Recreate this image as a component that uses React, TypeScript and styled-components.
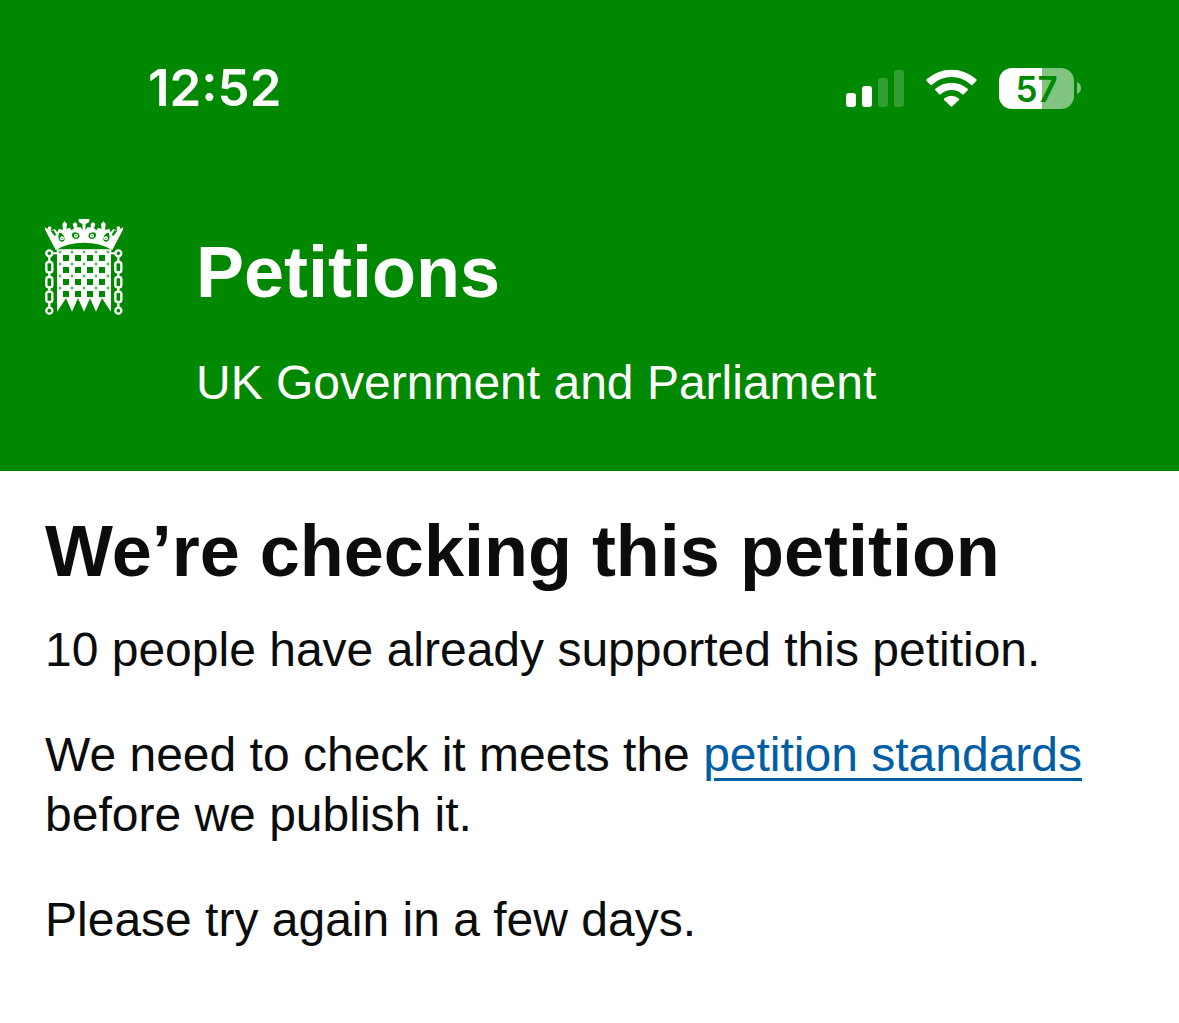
import React from "react";
import styled, { createGlobalStyle } from "styled-components";

const green = "#008800";

const GlobalStyle = createGlobalStyle`
  *, *::before, *::after { box-sizing: border-box; }
  body {
    margin: 0;
    background: #ffffff;
    color: #0b0c0c;
    font-family: "Liberation Sans", Arial, sans-serif;
    font-size: 48px;
    line-height: 60px;
  }
`;

const Banner = styled.header`
  background: ${green};
  color: #ffffff;
  padding-bottom: 58px;
`;

const StatusBar = styled.div`
  display: flex;
  align-items: center;
  justify-content: space-between;
  padding: 57px 98px 0 148px;
  font-family: Inter, sans-serif;
`;

const Clock = styled.time`
  font-size: 51px;
  font-weight: 600;
  line-height: 62px;
`;

const Indicators = styled.div`
  display: flex;
  align-items: center;
  gap: 22px;

  svg { display: block; }
`;

const BatteryGroup = styled.div`
  display: flex;
  align-items: center;
  gap: 3px;
`;

const Battery = styled.div<{ $level: number }>`
  width: 75px;
  height: 41px;
  border-radius: 13px;
  background: linear-gradient(
    to right,
    #ffffff ${(p) => p.$level}%,
    #80c480 ${(p) => p.$level}%
  );
  color: ${green};
  font-size: 35px;
  font-weight: 600;
  line-height: 42px;
  text-align: center;
`;

const Brand = styled.div`
  display: flex;
  align-items: flex-start;
  gap: 72px;
  padding: 99px 44px 0;
`;

const CrestLink = styled.a`
  flex: none;
  display: block;

  svg { display: block; }
`;

const BrandText = styled.div`
  padding-top: 9px;
`;

const SiteLink = styled.a`
  display: block;
  color: inherit;
  text-decoration: none;
  font-size: 72px;
  font-weight: 700;
  line-height: 90px;
`;

const Tagline = styled.p`
  margin: 36px 0 0;
`;

const Main = styled.main`
  padding: 35px 45px;
`;

const Heading = styled.h1`
  margin: 0 0 24px;
  font-size: 72px;
  font-weight: 700;
  line-height: 90px;
`;

const Paragraph = styled.p`
  margin: 0 0 45px;
`;

const TextLink = styled.a`
  color: #005ea5;
  text-decoration: underline;
  text-decoration-thickness: 3px;
  text-underline-offset: 7px;
`;

function Signal() {
  return (
    <svg width="58" height="38" viewBox="0 0 58 38" fill="#fff" role="img" aria-label="Signal strength">
      <rect x="0" y="24" width="10" height="14" rx="3" />
      <rect x="16" y="17" width="10" height="21" rx="3" />
      <rect x="32" y="9" width="10" height="29" rx="3" opacity=".2" />
      <rect x="48" y="1" width="10" height="37" rx="3" opacity=".2" />
    </svg>
  );
}

function Wifi() {
  return (
    <svg width="51" height="38" viewBox="288 55 153 114" fill="#fff" role="img" aria-label="Wi-Fi">
      <path d="M290 86Q322 57 364.500 57Q407 57 439 86Q441 88 439 91L428 102Q426 104 423 102Q398 79 364.500 79Q331 79 306 102Q303 104 301 102L290 91Q288 88 290 86Z" />
      <path d="M316 114Q337 96 364.500 96Q392 96 413 114Q415 117 413 119L402 130Q399 133 396 130Q382 118 364.500 118Q347 118 333 130Q330 133 327 130L316 119Q314 117 316 114Z" />
      <path d="M343 143Q353 135 364.500 135Q376 135 386 143Q389 146 386 149L367 167Q364.500 169 362 167L343 149Q340 146 343 143Z" />
    </svg>
  );
}

const barColumns = [99, 135, 171, 207];
const barRows = [150, 186, 222, 258];
const studColumns = [90, 126, 162, 198, 234];
const studRows = [141, 177, 213, 249];
const chainColumns = [58, 265];

function CrownHalf() {
  return (
    <>
      <path
        fill="#fff"
        d="M77 135L46 76L44 66L52 72L56 64L65 66L61 77L74 72L82 82L86 71L99 75L97 57L104 49L111 57L109 72L119 68L125 76L132 70L128 57L135 51L142 57L141 67L152 67L158 76L157 57L146 51V42H162V113Q114 113 77 135Z"
      />
      <path d="M62 78L71 76L78 88L75 94ZM87 83L94 84L102 93L104 105L99 110L90 109L85 98ZM127 84L135 82L146 85L149 95L142 102L132 101L126 94Z" fill={green} />
      <circle cx="96" cy="100" r="6" fill="#fff" />
      <circle cx="138" cy="92" r="6" fill="#fff" />
      <circle cx="96" cy="100" r="2" fill={green} />
      <circle cx="138" cy="92" r="2" fill={green} />
    </>
  );
}

function Portcullis() {
  return (
    <svg width="80" height="98" viewBox="42 39 240 294" role="img" aria-label="Petitions home">
      <path
        fill="#fff"
        d="M81 135H243V320L216 280L198 320L180 280L162 320L144 280L126 320L108 280L81 320Z"
      />
      <path d="M77 137Q114 110 162 110Q210 110 247 137Z" fill={green} />
      <CrownHalf />
      <g transform="matrix(-1 0 0 1 324 0)">
        <CrownHalf />
      </g>
      <path d="M80 133H244V142H80Z" fill="#fff" />
      <g fill={green}>
        {barRows.map((y) => barColumns.map((x) => <rect key={`${x}-${y}`} x={x} y={y} width="18" height="18" />))}
      </g>
      <g fill={green} opacity=".6">
        {studRows.map((y) => studColumns.map((x) => <rect key={`${x}-${y}`} x={x - 4} y={y - 4} width="8" height="8" />))}
      </g>
      <path d="M70 145H82M242 145H254" stroke="#fff" strokeWidth="6" />
      {chainColumns.map((x) => (
        <g key={x} fill="none" stroke="#fff" strokeWidth="7">
          <circle cx={x} cy="145" r="9" />
          <rect x={x - 9} y="171" width="18" height="31" rx="7" />
          <rect x={x - 9} y="216" width="18" height="31" rx="7" />
          <rect x={x - 9} y="260" width="18" height="31" rx="7" />
          <circle cx={x} cy="317" r="9" />
          <path d={`M${x} 156V174M${x} 199V219M${x} 244V263M${x} 288V306`} />
        </g>
      ))}
    </svg>
  );
}

export default function App() {
  return (
    <>
      <GlobalStyle />
      <Banner>
        <StatusBar>
          <Clock>12:52</Clock>
          <Indicators>
            <Signal />
            <Wifi />
            <BatteryGroup>
              <Battery $level={57}>57</Battery>
              <svg width="4" height="14" viewBox="0 0 4 14" aria-hidden="true">
                <path d="M0 1Q4 3 4 7Q4 11 0 13Z" fill="#80c480" />
              </svg>
            </BatteryGroup>
          </Indicators>
        </StatusBar>
        <Brand>
          <CrestLink href="#">
            <Portcullis />
          </CrestLink>
          <BrandText>
            <SiteLink href="#">Petitions</SiteLink>
            <Tagline>UK Government and Parliament</Tagline>
          </BrandText>
        </Brand>
      </Banner>
      <Main>
        <Heading>We’re checking this petition</Heading>
        <Paragraph>10 people have already supported this petition.</Paragraph>
        <Paragraph>
          We need to check it meets the <TextLink href="#">petition standards</TextLink> before we publish it.
        </Paragraph>
        <Paragraph>Please try again in a few days.</Paragraph>
      </Main>
    </>
  );
}
